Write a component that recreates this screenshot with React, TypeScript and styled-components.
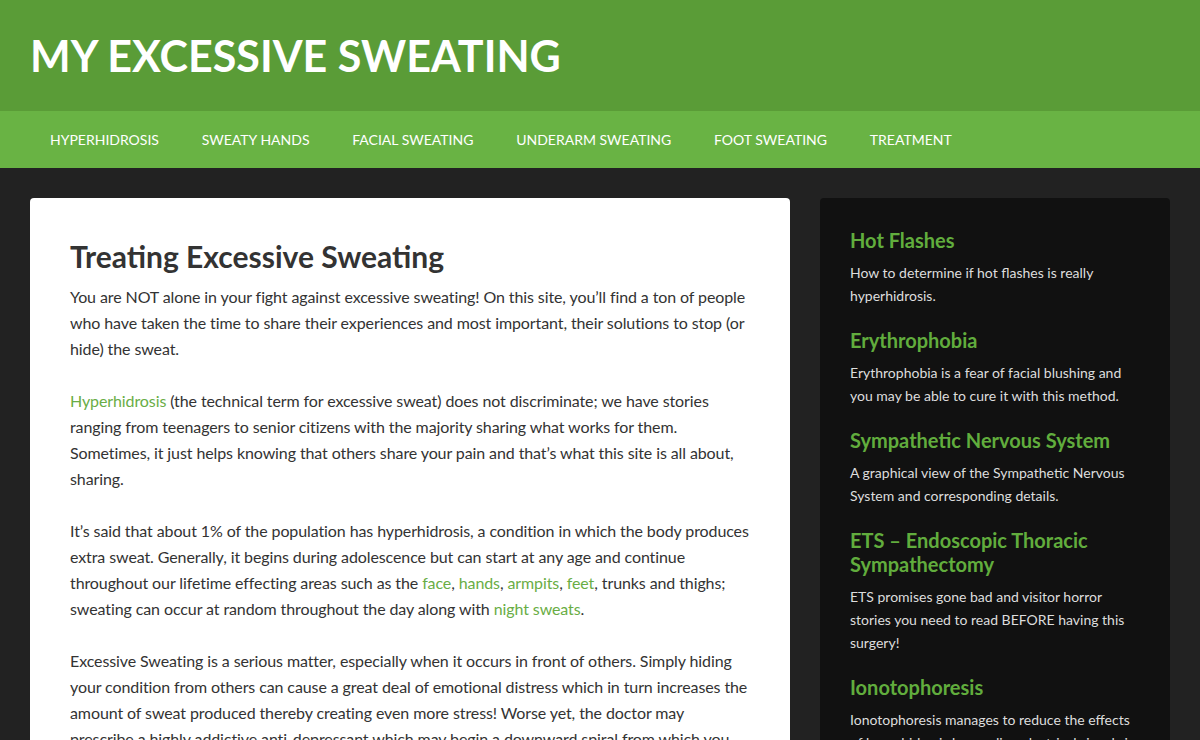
import React from "react";
import styled, { createGlobalStyle } from "styled-components";

const GlobalStyle = createGlobalStyle`
  html, body {
    margin: 0;
    padding: 0;
    background: #222222;
    font-family: Lato, "Open Sans", sans-serif;
  }
  * { box-sizing: border-box; }
`;

const navItems = [
  "Hyperhidrosis",
  "Sweaty Hands",
  "Facial Sweating",
  "Underarm Sweating",
  "Foot Sweating",
  "Treatment",
];

const widgets = [
  {
    title: "Hot Flashes",
    text: "How to determine if hot flashes is really hyperhidrosis.",
  },
  {
    title: "Erythrophobia",
    text: "Erythrophobia is a fear of facial blushing and you may be able to cure it with this method.",
  },
  {
    title: "Sympathetic Nervous System",
    text: "A graphical view of the Sympathetic Nervous System and corresponding details.",
  },
  {
    title: "ETS \u2013 Endoscopic Thoracic Sympathectomy",
    text: "ETS promises gone bad and visitor horror stories you need to read BEFORE having this surgery!",
  },
  {
    title: "Ionotophoresis",
    text: "Ionotophoresis manages to reduce the effects of hyperhidrosis by sending electrical signals in to your skin.",
  },
];

const App: React.FC = () => {
  return (
    <>
      <GlobalStyle />
      <Header>
        <SiteTitle>My Excessive Sweating</SiteTitle>
      </Header>
      <Nav>
        <ul>
          {navItems.map((item) => (
            <li key={item}>
              <a href="#">{item}</a>
            </li>
          ))}
        </ul>
      </Nav>
      <Body>
        <Main>
          <h1>Treating Excessive Sweating</h1>
          <p>
            You are NOT alone in your fight against excessive sweating! On this
            site, you’ll find a ton of people who have taken the time to share
            their experiences and most important, their solutions to stop (or
            hide) the sweat.
          </p>
          <p>
            <a href="#">Hyperhidrosis</a> (the technical term for excessive
            sweat) does not discriminate; we have stories ranging from
            teenagers to senior citizens with the majority sharing what works
            for them. Sometimes, it just helps knowing that others share your
            pain and that’s what this site is all about, sharing.
          </p>
          <p>
            It’s said that about 1% of the population has hyperhidrosis, a
            condition in which the body produces extra sweat. Generally, it
            begins during adolescence but can start at any age and continue
            throughout our lifetime effecting areas such as the{" "}
            <a href="#">face</a>, <a href="#">hands</a>,{" "}
            <a href="#">armpits</a>, <a href="#">feet</a>, trunks and thighs;
            sweating can occur at random throughout the day along with{" "}
            <a href="#">night sweats</a>.
          </p>
          <p>
            Excessive Sweating is a serious matter, especially when it occurs
            in front of others. Simply hiding your condition from others can
            cause a great deal of emotional distress which in turn increases
            the amount of sweat produced thereby creating even more stress!
            Worse yet, the doctor may prescribe a highly addictive
            anti-depressant which may begin a downward spiral from which you
            may never recover.
          </p>
        </Main>
        <Sidebar>
          {widgets.map((w) => (
            <Widget key={w.title}>
              <h3>
                <a href="#">{w.title}</a>
              </h3>
              <p>{w.text}</p>
            </Widget>
          ))}
        </Sidebar>
      </Body>
    </>
  );
};

export default App;

const Header = styled.header`
  background: #5a9c37;
  height: 111px;
  padding: 0 30px;
  display: flex;
  align-items: center;
`;

const SiteTitle = styled.div`
  color: #fff;
  font-size: 43px;
  font-weight: 700;
  text-transform: uppercase;
  line-height: 1;
`;

const Nav = styled.nav`
  background: #69b344;
  height: 57px;
  padding: 0 30px;
  ul {
    list-style: none;
    margin: 0;
    padding: 0;
    display: flex;
    height: 100%;
    align-items: center;
  }
  li a {
    display: block;
    padding: 0 21.4px;
    color: #fff;
    text-decoration: none;
    text-transform: uppercase;
    font-size: 14px;
    line-height: 57px;
  }
  li:first-child a {
    padding-left: 20px;
  }
`;

const Body = styled.div`
  display: flex;
  align-items: flex-start;
  gap: 30px;
  padding: 30px;
`;

const Main = styled.main`
  width: 760px;
  flex-shrink: 0;
  background: #fff;
  border-radius: 4px;
  padding: 38px 40px 40px;
  color: #333;
  h1 {
    margin: 0 0 8px;
    font-size: 30px;
    font-weight: 700;
    line-height: 40px;
    color: #333;
  }
  p {
    margin: 0 0 26px;
    font-size: 16px;
    line-height: 26px;
    letter-spacing: -0.1px;
  }
  a {
    color: #69ad45;
    text-decoration: none;
  }
`;

const Sidebar = styled.aside`
  width: 350px;
  flex-shrink: 0;
  background: #111;
  border-radius: 4px;
  padding: 30px;
`;

const Widget = styled.section`
  margin-bottom: 20.5px;
  h3 {
    margin: 0 0 10px;
    font-size: 20px;
    font-weight: 700;
    line-height: 24px;
  }
  h3 a {
    color: #61ad3d;
    text-decoration: none;
  }
  p {
    margin: 0;
    color: #ddd;
    font-size: 14px;
    line-height: 22.8px;
  }
`;
